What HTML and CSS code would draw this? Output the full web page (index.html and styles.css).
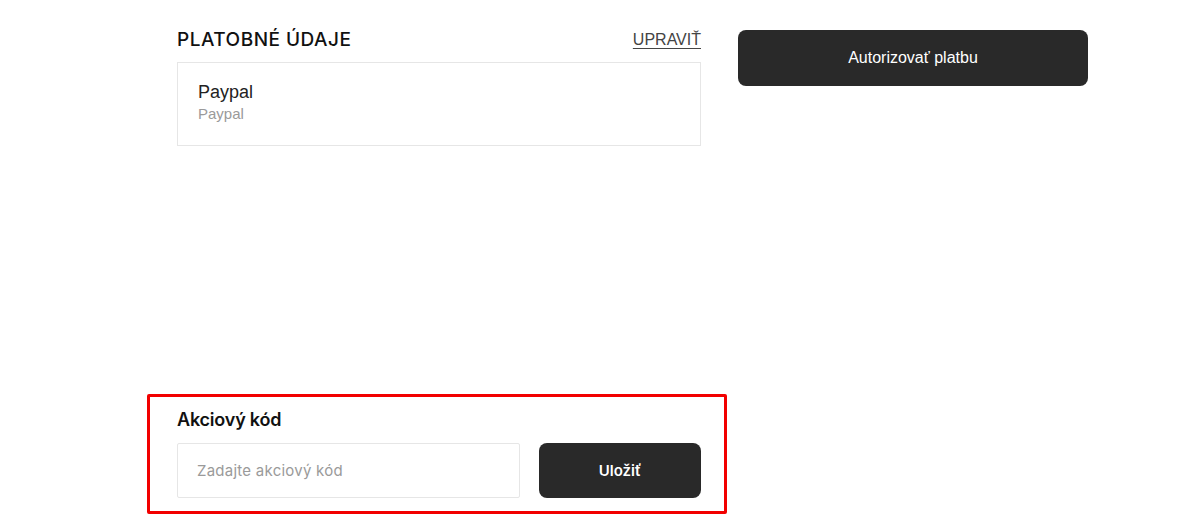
FILE: index.html
```html
<!DOCTYPE html>
<html lang="sk">
<head>
<meta charset="utf-8">
<title>Platba</title>
<link rel="stylesheet" href="styles.css">
</head>
<body>
<div class="page">
  <main class="main-col">
    <section class="payment">
      <div class="section-head">
        <h2 class="section-title">PLATOBNÉ ÚDAJE</h2>
        <a class="edit-link" href="#">UPRAVIŤ</a>
      </div>
      <div class="pay-card">
        <div class="pay-name">Paypal</div>
        <div class="pay-sub">Paypal</div>
      </div>
    </section>
    <section class="promo">
      <h3 class="promo-title">Akciový kód</h3>
      <form class="promo-form">
        <input class="promo-input" type="text" placeholder="Zadajte akciový kód">
        <button class="btn btn-save" type="button">Uložiť</button>
      </form>
    </section>
  </main>
  <aside class="side-col">
    <button class="btn btn-authorize" type="button">Autorizovať platbu</button>
  </aside>
</div>
</body>
</html>
```

FILE: styles.css
```css
* { box-sizing: border-box; }
html, body { margin: 0; padding: 0; background: #fff; }
body {
  font-family: "Liberation Sans", Arial, sans-serif;
  color: #1a1a1a;
}
.page {
  display: flex;
  align-items: flex-start;
  gap: 37px;
  padding: 30px 0 0 177px;
}
.main-col {
  width: 524px;
  display: flex;
  flex-direction: column;
}
.side-col { width: 350px; }

.section-head {
  display: flex;
  justify-content: space-between;
  align-items: center;
  height: 20px;
  margin-bottom: 12px;
}
.section-title {
  margin: 0;
  font-family: Inter, "Liberation Sans", sans-serif;
  font-weight: 500;
  font-size: 19px;
  line-height: 20px;
  color: #111;
  letter-spacing: 0.5px;
}
.edit-link {
  font-family: "Liberation Sans", Arial, sans-serif;
  font-size: 16px;
  color: #444;
  text-decoration: underline;
  text-underline-offset: 3px;
  text-decoration-thickness: 1px;
}
.pay-card {
  border: 1px solid #e6e6e6;
  height: 84px;
  padding: 18px 20px;
}
.pay-name {
  font-size: 18px;
  line-height: 22px;
  color: #222;
}
.pay-sub {
  font-size: 15px;
  line-height: 20px;
  margin-top: 1px;
  color: #9a9a9a;
}

.promo {
  margin: 248px -26px 0 -30px;
  padding: 13px 23px 13px 27px;
  border: 3px solid #f20000;
  border-radius: 2px;
}
.promo-title {
  margin: 0 0 13px;
  font-family: Inter, "Liberation Sans", sans-serif;
  font-weight: 600;
  font-size: 18px;
  line-height: 20px;
  color: #111;
  letter-spacing: -0.2px;
}
.promo-form {
  display: flex;
  gap: 19px;
  margin: 0;
}
.promo-input {
  width: 343px;
  height: 55px;
  border: 1px solid #e6e6e6;
  border-radius: 2px;
  padding: 0 19px;
  font-family: Inter, "Liberation Sans", sans-serif;
  font-size: 15px;
  letter-spacing: 0.25px;
  color: #222;
  outline: none;
}
.promo-input::placeholder { color: #9a9a9a; }

.btn {
  border: 0;
  background: #292929;
  color: #fff;
  border-radius: 8px;
  font-family: "Liberation Sans", Arial, sans-serif;
  cursor: pointer;
}
.btn-save {
  flex: 1;
  height: 55px;
  font-family: Inter, "Liberation Sans", sans-serif;
  font-size: 15px;
  font-weight: 600;
}
.btn-authorize {
  width: 350px;
  height: 56px;
  font-size: 16px;
}
```
